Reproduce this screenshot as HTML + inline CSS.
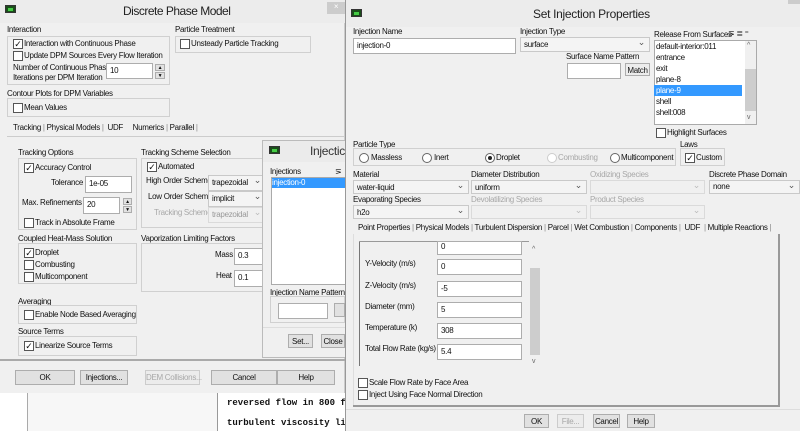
<!DOCTYPE html>
<html><head><meta charset="utf-8"><style>
*{margin:0;padding:0;box-sizing:border-box}
body{width:800px;height:431px;overflow:hidden;background:#f0f0f0;position:relative;font:8px "Liberation Sans",sans-serif;letter-spacing:-0.3px;color:#111}
div,span{position:absolute}
.t{white-space:nowrap;line-height:10px}
.g{color:#a8a8a8}
.b{border:1px solid #d0d0d0}
.i{background:#fff;border:1px solid #adadad;padding:2px 3px;white-space:nowrap;line-height:10px}
.s{background:#f4f4f4;border:1px solid #c9c9c9;padding:2px 3px;white-space:nowrap;line-height:10px}
.s:after{content:"⌄";position:absolute;right:4px;top:-1px;font-size:9px;color:#555}
.d{background:#f0f0f0;border:1px solid #dadada}
.d:after{content:"⌄";position:absolute;right:4px;top:-1px;font-size:9px;color:#bbb}
.c{width:10px;height:10px;background:#fff;border:1px solid #555;font-size:9px;line-height:8px;text-align:center;letter-spacing:0}
.r{width:10px;height:10px;background:#fff;border:1px solid #666;border-radius:50%}
.btn{background:#e1e1e1;border:1px solid #adadad;text-align:center;line-height:13px;white-space:nowrap}
.sel{background:#3399ff;color:#fff}
</style></head><body>
<!-- LEFT DIALOG -->
<div style="left:0;top:0;width:345px;height:393px;background:#f0f0f0;border-right:1px solid #ccc"></div>
<div style="left:0;top:0;width:345px;height:23px;background:#ececec"></div>
<div style="left:5px;top:5px;width:11px;height:8px;background:#1b4d1b;border:1px solid #333"><span style="left:2px;top:2px;width:5px;height:3px;background:#4c4"></span></div>
<div class="t" style="left:123px;top:4px;font-size:12px;letter-spacing:-0.5px;line-height:15px;color:#222">Discrete Phase Model</div>
<div style="left:327px;top:2px;width:18px;height:12px;background:#ccc;color:#fff;text-align:center;font-size:8px">×</div>

<div class="t" style="left:7px;top:25px">Interaction</div>
<div class="b" style="left:7px;top:36px;width:163px;height:49px"></div>
<div class="c" style="left:13px;top:39px">✓</div><div class="t" style="left:24px;top:39px">Interaction with Continuous Phase</div>
<div class="c" style="left:13px;top:51px"></div><div class="t" style="left:24px;top:51px">Update DPM Sources Every Flow Iteration</div>
<div class="t" style="left:13px;top:63px">Number of Continuous Phase<br>Iterations per DPM Iteration</div>
<div class="i" style="left:106px;top:63px;width:47px;height:16px">10</div>
<div class="btn" style="left:155px;top:64px;width:10px;height:7px;font-size:5px;line-height:6px">▲</div>
<div class="btn" style="left:155px;top:72px;width:10px;height:7px;font-size:5px;line-height:6px">▼</div>

<div class="t" style="left:175px;top:25px">Particle Treatment</div>
<div class="b" style="left:175px;top:36px;width:136px;height:17px"></div>
<div class="c" style="left:180px;top:39px"></div><div class="t" style="left:191px;top:39px">Unsteady Particle Tracking</div>

<div class="t" style="left:7px;top:89px">Contour Plots for DPM Variables</div>
<div class="b" style="left:7px;top:98px;width:163px;height:19px"></div>
<div class="c" style="left:13px;top:103px"></div><div class="t" style="left:24px;top:103px">Mean Values</div>

<div class="t" style="left:13px;top:123px">Tracking <span style="position:static;color:#888">|</span> Physical Models <span style="position:static;color:#888">|</span>&nbsp; UDF &nbsp;&nbsp;&nbsp; Numerics <span style="position:static;color:#888">|</span> Parallel <span style="position:static;color:#888">|</span></div>
<div style="left:7px;top:136px;width:338px;height:1px;background:#ccc"></div>

<div class="t" style="left:18px;top:148px">Tracking Options</div>
<div class="b" style="left:18px;top:158px;width:119px;height:72px"></div>
<div class="c" style="left:24px;top:163px">✓</div><div class="t" style="left:35px;top:163px">Accuracy Control</div>
<div class="t" style="left:51px;top:178px">Tolerance</div>
<div class="i" style="left:85px;top:176px;width:47px;height:17px">1e-05</div>
<div class="t" style="left:22px;top:198px">Max. Refinements</div>
<div class="i" style="left:83px;top:197px;width:37px;height:17px">20</div>
<div class="btn" style="left:123px;top:198px;width:9px;height:7px;font-size:5px;line-height:6px">▲</div>
<div class="btn" style="left:123px;top:206px;width:9px;height:7px;font-size:5px;line-height:6px">▼</div>
<div class="c" style="left:24px;top:218px"></div><div class="t" style="left:35px;top:218px">Track in Absolute Frame</div>

<div class="t" style="left:141px;top:148px">Tracking Scheme Selection</div>
<div class="b" style="left:141px;top:158px;width:125px;height:70px"></div>
<div class="c" style="left:147px;top:162px">✓</div><div class="t" style="left:158px;top:162px">Automated</div>
<div class="t" style="left:146px;top:176px">High Order Scheme</div>
<div class="s" style="left:208px;top:175px;width:58px;height:16px">trapezoidal</div>
<div class="t" style="left:148px;top:192px">Low Order Scheme</div>
<div class="s" style="left:208px;top:191px;width:58px;height:16px">implicit</div>
<div class="t g" style="left:154px;top:208px">Tracking Scheme</div>
<div class="d t" style="left:208px;top:207px;width:58px;height:16px;padding:2px 3px;color:#999">trapezoidal</div>

<div class="t" style="left:18px;top:234px">Coupled Heat-Mass Solution</div>
<div class="b" style="left:18px;top:243px;width:119px;height:41px"></div>
<div class="c" style="left:24px;top:248px">✓</div><div class="t" style="left:35px;top:248px">Droplet</div>
<div class="c" style="left:24px;top:260px"></div><div class="t" style="left:35px;top:260px">Combusting</div>
<div class="c" style="left:24px;top:272px"></div><div class="t" style="left:35px;top:272px">Multicomponent</div>

<div class="t" style="left:141px;top:234px">Vaporization Limiting Factors</div>
<div class="b" style="left:141px;top:243px;width:125px;height:49px"></div>
<div class="t" style="left:215px;top:250px">Mass</div>
<div class="i" style="left:234px;top:248px;width:32px;height:17px">0.3</div>
<div class="t" style="left:216px;top:271px">Heat</div>
<div class="i" style="left:234px;top:270px;width:32px;height:17px">0.1</div>

<div class="t" style="left:18px;top:297px">Averaging</div>
<div class="b" style="left:18px;top:305px;width:119px;height:19px"></div>
<div class="c" style="left:24px;top:310px"></div><div class="t" style="left:35px;top:310px">Enable Node Based Averaging</div>
<div class="t" style="left:18px;top:327px">Source Terms</div>
<div class="b" style="left:18px;top:336px;width:119px;height:20px"></div>
<div class="c" style="left:24px;top:341px">✓</div><div class="t" style="left:35px;top:341px">Linearize Source Terms</div>
<div style="left:0;top:359px;width:345px;height:2px;background:#aaa"></div>

<div class="btn" style="left:15px;top:370px;width:60px;height:15px">OK</div>
<div class="btn" style="left:80px;top:370px;width:48px;height:15px">Injections...</div>
<div class="btn g" style="left:145px;top:370px;width:55px;height:15px;background:#ececec;border-color:#ccc">DEM Collisions...</div>
<div class="btn" style="left:211px;top:370px;width:66px;height:15px">Cancel</div>
<div class="btn" style="left:277px;top:370px;width:58px;height:15px">Help</div>

<div style="left:0;top:393px;width:345px;height:38px;background:#fff"></div>
<div style="left:27px;top:393px;width:1px;height:38px;background:#aaa"></div>
<div style="left:28px;top:393px;width:189px;height:38px;background:#f7f7f7"></div>
<div style="left:217px;top:393px;width:1px;height:38px;background:#999"></div>
<div class="t" style="left:227px;top:398px;font:bold 9px 'Liberation Mono',monospace;letter-spacing:0">reversed flow in 800 fa</div>
<div class="t" style="left:227px;top:418px;font:bold 9px 'Liberation Mono',monospace;letter-spacing:0">turbulent viscosity lir</div>

<!-- INJECTIONS DIALOG -->
<div style="left:262px;top:140px;width:83px;height:218px;background:#f0f0f0;border:1px solid #bbb;border-right:none"></div>
<div style="left:263px;top:141px;width:82px;height:21px;background:#ebebeb"></div>
<div style="left:269px;top:146px;width:11px;height:8px;background:#1b4d1b;border:1px solid #333"><span style="left:2px;top:2px;width:5px;height:3px;background:#4c4"></span></div>
<div class="t" style="left:310px;top:144px;font-size:12px;letter-spacing:-0.3px;line-height:15px;color:#333">Injectic</div>
<div class="t" style="left:270px;top:167px">Injections</div>
<div class="t" style="left:335px;top:167px;font-size:8px">⋝</div>
<div style="left:271px;top:177px;width:74px;height:108px;background:#fff;border:1px solid #aaa;border-right:none"></div>
<div class="t sel" style="left:272px;top:178px;width:73px;height:10px">injection-0</div>
<div class="t" style="left:270px;top:288px">Injection Name Pattern</div>
<div class="b" style="left:270px;top:296px;width:75px;height:27px"></div>
<div class="i" style="left:278px;top:303px;width:50px;height:16px"></div>
<div class="btn" style="left:334px;top:303px;width:11px;height:14px"></div>
<div style="left:263px;top:327px;width:82px;height:1px;background:#ddd"></div>
<div class="btn" style="left:288px;top:334px;width:25px;height:14px">Set...</div>
<div class="btn" style="left:321px;top:334px;width:24px;height:14px">Close</div>

<!-- RIGHT DIALOG -->
<div style="left:345px;top:0;width:455px;height:431px;background:#f0f0f0;border-left:1px solid #999"></div>
<div style="left:346px;top:0;width:454px;height:27px;background:#ececec"></div>
<div style="left:788px;top:0;width:12px;height:4px;background:#ccc"></div>
<div style="left:351px;top:9px;width:11px;height:8px;background:#1b4d1b;border:1px solid #333"><span style="left:2px;top:2px;width:5px;height:3px;background:#4c4"></span></div>
<div class="t" style="left:533px;top:6px;font-size:12px;letter-spacing:-0.3px;line-height:16px;color:#222">Set Injection Properties</div>

<div class="t" style="left:353px;top:27px">Injection Name</div>
<div class="i" style="left:353px;top:38px;width:163px;height:16px">injection-0</div>
<div class="t" style="left:520px;top:27px">Injection Type</div>
<div class="s" style="left:520px;top:37px;width:130px;height:15px">surface</div>
<div class="t" style="left:566px;top:52px">Surface Name Pattern</div>
<div class="i" style="left:567px;top:63px;width:54px;height:16px"></div>
<div class="btn" style="left:625px;top:63px;width:25px;height:13px;background:#ececec">Match</div>

<div class="t" style="left:654px;top:30px">Release From Surfaces</div>
<div class="t" style="left:728px;top:29px;font-size:8px">⋝ ≣ ⁼</div>
<div style="left:654px;top:40px;width:103px;height:85px;background:#fff;border:1px solid #aaa"></div>
<div class="t" style="left:656px;top:41px;line-height:11px">default-interior:011<br>entrance<br>exit<br>plane-8<br><span class="sel" style="position:static;display:inline-block;width:88px;margin-left:-2px;padding-left:2px">plane-9</span><br>shell<br>shell:008</div>
<div style="left:745px;top:41px;width:11px;height:83px;background:#f0f0f0"></div>
<div style="left:745px;top:69px;width:11px;height:42px;background:#cdcdcd"></div>
<div class="t" style="left:747px;top:41px;font-size:7px;color:#666">^</div>
<div class="t" style="left:747px;top:113px;font-size:7px;color:#666">v</div>
<div class="c" style="left:656px;top:128px"></div><div class="t" style="left:667px;top:128px">Highlight Surfaces</div>

<div class="t" style="left:353px;top:140px">Particle Type</div>
<div class="b" style="left:353px;top:148px;width:323px;height:18px"></div>
<div class="r" style="left:359px;top:153px"></div><div class="t" style="left:371px;top:153px">Massless</div>
<div class="r" style="left:422px;top:153px"></div><div class="t" style="left:434px;top:153px">Inert</div>
<div class="r" style="left:485px;top:153px"><span style="left:2px;top:2px;width:4px;height:4px;border-radius:50%;background:#222"></span></div><div class="t" style="left:496px;top:153px">Droplet</div>
<div class="r" style="left:547px;top:153px;border-color:#ccc"></div><div class="t g" style="left:558px;top:153px">Combusting</div>
<div class="r" style="left:610px;top:153px"></div><div class="t" style="left:621px;top:153px">Multicomponent</div>
<div class="t" style="left:680px;top:140px">Laws</div>
<div class="b" style="left:680px;top:148px;width:45px;height:18px"></div>
<div class="c" style="left:685px;top:153px">✓</div><div class="t" style="left:696px;top:153px">Custom</div>

<div class="t" style="left:353px;top:170px">Material</div>
<div class="t" style="left:471px;top:170px">Diameter Distribution</div>
<div class="t g" style="left:590px;top:170px">Oxidizing Species</div>
<div class="t" style="left:709px;top:170px">Discrete Phase Domain</div>
<div class="s" style="left:353px;top:180px;width:116px;height:14px">water-liquid</div>
<div class="s" style="left:471px;top:180px;width:116px;height:14px">uniform</div>
<div class="d" style="left:590px;top:180px;width:115px;height:14px"></div>
<div class="s" style="left:709px;top:180px;width:91px;height:14px;padding-top:1px">none</div>
<div class="t" style="left:353px;top:195px">Evaporating Species</div>
<div class="t g" style="left:471px;top:195px">Devolatilizing Species</div>
<div class="t g" style="left:590px;top:195px">Product Species</div>
<div class="s" style="left:353px;top:205px;width:116px;height:14px">h2o</div>
<div class="d" style="left:471px;top:205px;width:116px;height:14px"></div>
<div class="d" style="left:590px;top:205px;width:115px;height:14px"></div>

<div class="t" style="left:358px;top:223px">Point Properties <span style="position:static;color:#888">|</span> Physical Models <span style="position:static;color:#888">|</span> Turbulent Dispersion <span style="position:static;color:#888">|</span> Parcel <span style="position:static;color:#888">|</span> Wet Combustion <span style="position:static;color:#888">|</span> Components <span style="position:static;color:#888">|</span>&nbsp; UDF &nbsp;<span style="position:static;color:#888">|</span> Multiple Reactions <span style="position:static;color:#888">|</span></div>
<div style="left:353px;top:234px;width:1px;height:172px;background:#ddd"></div>
<div style="left:778px;top:234px;width:2px;height:172px;background:#999"></div>
<div style="left:353px;top:405px;width:427px;height:2px;background:#999"></div>
<div style="left:359px;top:241px;width:1px;height:125px;background:#777"></div>
<div style="left:359px;top:241px;width:170px;height:1px;background:#999"></div>
<div class="i" style="left:437px;top:241px;width:85px;height:14px;padding-top:0">0</div>
<div class="t" style="left:365px;top:259px">Y-Velocity (m/s)</div>
<div class="i" style="left:437px;top:259px;width:85px;height:16px">0</div>
<div class="t" style="left:365px;top:281px">Z-Velocity (m/s)</div>
<div class="i" style="left:437px;top:281px;width:85px;height:16px">-5</div>
<div class="t" style="left:365px;top:302px">Diameter (mm)</div>
<div class="i" style="left:437px;top:302px;width:85px;height:16px">5</div>
<div class="t" style="left:365px;top:323px">Temperature (k)</div>
<div class="i" style="left:437px;top:323px;width:85px;height:16px">308</div>
<div class="t" style="left:365px;top:344px">Total Flow Rate (kg/s)</div>
<div class="i" style="left:437px;top:344px;width:85px;height:16px">5.4</div>
<div style="left:530px;top:268px;width:10px;height:87px;background:#cdcdcd"></div>
<div class="t" style="left:532px;top:245px;font-size:7px;color:#666">^</div>
<div class="t" style="left:532px;top:357px;font-size:7px;color:#666">v</div>
<div class="c" style="left:358px;top:378px"></div><div class="t" style="left:369px;top:378px">Scale Flow Rate by Face Area</div>
<div class="c" style="left:358px;top:390px"></div><div class="t" style="left:369px;top:390px">Inject Using Face Normal Direction</div>
<div style="left:346px;top:409px;width:454px;height:1px;background:#ddd"></div>
<div class="btn" style="left:524px;top:414px;width:25px;height:14px">OK</div>
<div class="btn g" style="left:557px;top:414px;width:27px;height:14px;background:#ececec;border-color:#ccc">File...</div>
<div class="btn" style="left:593px;top:414px;width:27px;height:14px">Cancel</div>
<div class="btn" style="left:627px;top:414px;width:28px;height:14px">Help</div>
</body></html>
